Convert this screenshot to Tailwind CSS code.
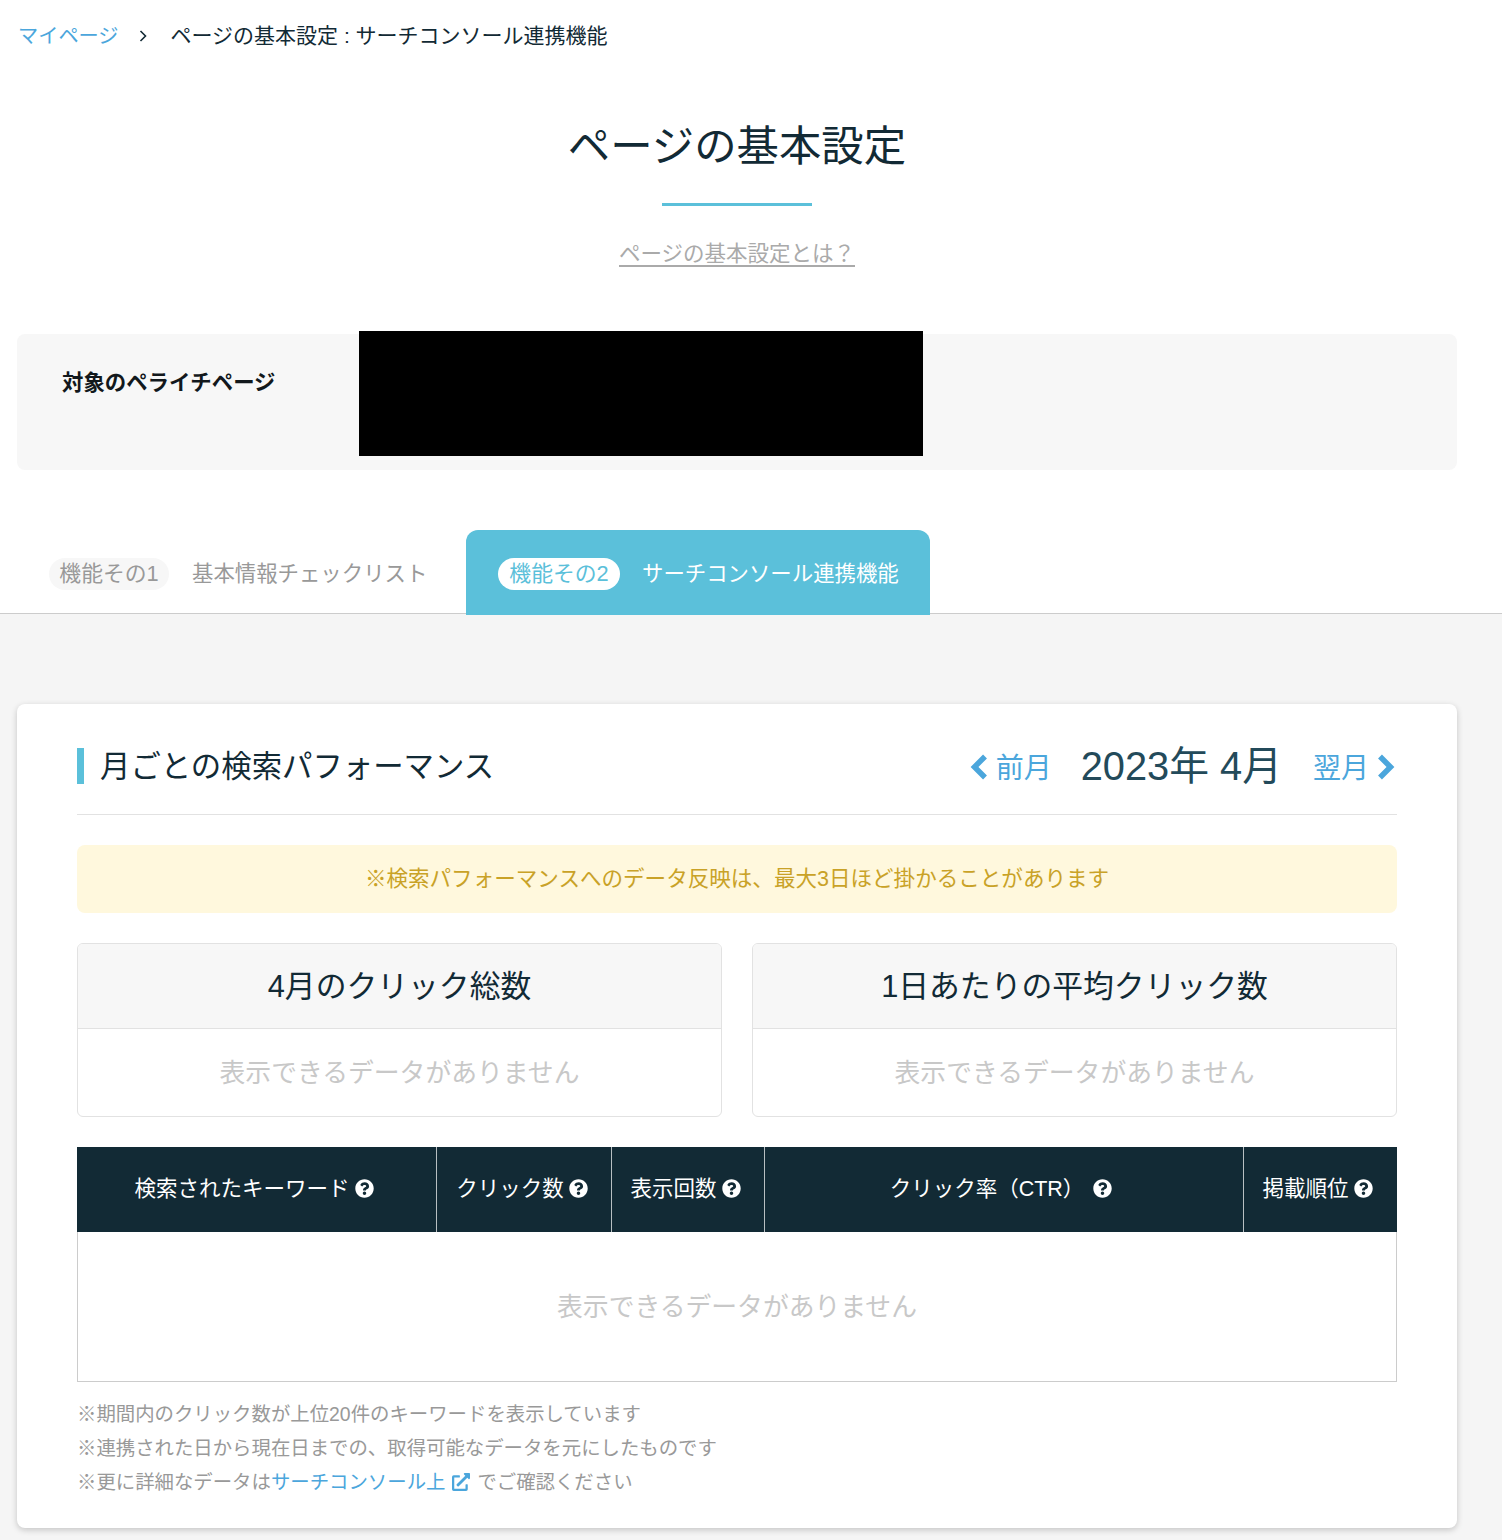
<!DOCTYPE html>
<html lang="ja">
<head>
    <meta charset="UTF-8">
    <title>ページの基本設定</title>
    <script src="https://cdn.jsdelivr.net/npm/@tailwindcss/browser@4"></script>
</head>
<body class="bg-white text-[#122a35] font-['Liberation_Sans','Noto_Sans_CJK_JP',sans-serif]">
    <!-- Breadcrumb -->
    <div class="flex items-center h-[36px] mt-[18px] pl-[18px] text-[21px] leading-[36px]">
        <a class="w-[102.5px] text-[#4ba6dc] text-[20.2px]">マイページ</a>
        <svg class="w-[8px] h-[12px] ml-[18px] mr-[24px]" viewBox="0 0 8 12" fill="none" stroke="#122a35" stroke-width="1.6"><path d="M1.5 1l5 5-5 5"/></svg>
        <span>ページの基本設定 : サーチコンソール連携機能</span>
    </div>

    <!-- Title -->
    <div class="flex flex-col items-center w-[1474px]">
        <h1 class="mt-[63px] text-[42.4px] leading-[60px]">ページの基本設定</h1>
        <div class="mt-[26px] w-[150px] h-[3px] bg-[#5bc0da]"></div>
        <a class="mt-[33px] text-[21.5px] leading-[30px] text-[#aaaaaa] border-b-2 border-[#aaaaaa] h-[28px]">ページの基本設定とは？</a>
    </div>

    <!-- Target page -->
    <div class="flex mt-[67px] mx-[17px] w-[1440px] h-[136px] bg-[#f7f7f7] rounded-lg">
        <div class="w-[342px] pl-[45px] pt-[34px] text-[21.4px] leading-[30px] font-bold text-[#12181c]">対象のペライチページ</div>
        <div class="w-[564px] h-[125px] -mt-[3px] bg-black"></div>
    </div>

    <!-- Tabs -->
    <div class="flex mt-[60px] h-[83px] pl-[49px] border-b border-[#cccccc] box-content">
        <div class="flex items-center w-[417px] h-[87px] pt-[1px]">
            <span class="w-[120px] h-[32px] rounded-full bg-[#f7f7f7] text-[#999999] text-[21.8px] leading-[32px] text-center">機能その1</span>
            <span class="ml-[23px] text-[#999999] text-[21.4px]">基本情報チェックリスト</span>
        </div>
        <div class="flex items-center w-[464px] h-[85px] pl-[32px] pt-[2px] bg-[#5bc0da] rounded-t-xl">
            <span class="w-[122px] h-[32px] rounded-full bg-white text-[#5bc0da] text-[21.8px] leading-[32px] text-center">機能その2</span>
            <span class="ml-[22px] pt-[2px] text-white text-[21.4px]">サーチコンソール連携機能</span>
        </div>
    </div>

    <!-- Search performance -->
    <div class="bg-[#f5f5f5] pt-[90px] pb-[12px] px-[17px]">
        <div class="w-[1440px] h-[824px] bg-white rounded-lg shadow-[0_2px_6px_rgba(0,0,0,0.2)] px-[60px] pt-[44px]">
            <div class="flex items-center justify-between h-[36px] border-b border-[#e2e2e2] pb-[30px] box-content">
                <h2 class="border-l-[7px] border-[#5bc0da] pl-[16px] h-[36px] text-[30.4px] leading-[36px]">月ごとの検索パフォーマンス</h2>
                <div class="flex items-center leading-none">
                    <svg class="w-[18px] h-[26px] mt-[2px]" viewBox="0 0 18 26" fill="none" stroke="#4ba6dc" stroke-width="5.5"><path d="M15 2.5L4.5 13 15 23.5"/></svg>
                    <span class="ml-[8px] pt-[6px] text-[28px] text-[#4ba6dc]">前月</span>
                    <span class="ml-[29px] pt-[2px] text-[39.8px] text-[#234a5a]">2023年 4月</span>
                    <span class="ml-[31px] pt-[6px] text-[28px] text-[#4ba6dc]">翌月</span>
                    <svg class="w-[18px] h-[26px] mt-[2px] ml-[8px] mr-[2px]" viewBox="0 0 18 26" fill="none" stroke="#4ba6dc" stroke-width="5.5"><path d="M3 2.5L13.5 13 3 23.5"/></svg>
                </div>
            </div>

            <div class="mt-[30px] h-[68px] bg-[#fff8dd] rounded-lg flex items-center justify-center text-[21.55px] text-[#c9a227]">※検索パフォーマンスへのデータ反映は、最大3日ほど掛かることがあります</div>

            <div class="grid grid-cols-2 gap-[30px] mt-[30px]">
                <div class="h-[174px] border border-[#e2e2e2] rounded-md overflow-hidden">
                    <div class="h-[85px] pt-[2px] bg-[#f7f7f7] border-b border-[#e2e2e2] flex items-center justify-center text-[30.8px]">4月のクリック総数</div>
                    <div class="h-[87px] pt-[2px] flex items-center justify-center text-[25.8px] text-[#c8c8c8]">表示できるデータがありません</div>
                </div>
                <div class="h-[174px] border border-[#e2e2e2] rounded-md overflow-hidden">
                    <div class="h-[85px] pt-[2px] bg-[#f7f7f7] border-b border-[#e2e2e2] flex items-center justify-center text-[30.8px]">1日あたりの平均クリック数</div>
                    <div class="h-[87px] pt-[2px] flex items-center justify-center text-[25.8px] text-[#c8c8c8]">表示できるデータがありません</div>
                </div>
            </div>

            <!-- Keyword table -->
            <div class="mt-[30px] flex h-[85px] bg-[#122a35] text-white text-[21.5px]">
                <div class="w-[359px] pr-[5px] flex items-center justify-center gap-[5px]">検索されたキーワード
                    <svg class="w-[19px] h-[19px] -mt-[2px]" viewBox="0 0 512 512" fill="#fff"><path d="M504 256c0 136.997-111.043 248-248 248S8 392.997 8 256C8 119.083 119.043 8 256 8s248 111.083 248 248zM262.655 90c-54.497 0-89.255 22.957-116.549 63.758-3.536 5.286-2.353 12.415 2.715 16.258l34.699 26.31c5.205 3.947 12.621 3.008 16.665-2.122 17.864-22.658 30.113-35.797 57.303-35.797 20.429 0 45.698 13.148 45.698 32.958 0 14.976-12.363 22.667-32.534 33.976C247.128 238.528 216 254.941 216 296v4c0 6.627 5.373 12 12 12h56c6.627 0 12-5.373 12-12v-1.333c0-28.462 83.186-29.647 83.186-106.667 0-58.002-60.165-102-116.531-102zM256 338c-25.365 0-46 20.635-46 46 0 25.364 20.635 46 46 46s46-20.636 46-46c0-25.365-20.635-46-46-46z"/></svg>
                </div>
                <div class="w-[175px] pr-[4px] border-l border-white/70 flex items-center justify-center gap-[5px]">クリック数
                    <svg class="w-[19px] h-[19px] -mt-[2px]" viewBox="0 0 512 512" fill="#fff"><path d="M504 256c0 136.997-111.043 248-248 248S8 392.997 8 256C8 119.083 119.043 8 256 8s248 111.083 248 248zM262.655 90c-54.497 0-89.255 22.957-116.549 63.758-3.536 5.286-2.353 12.415 2.715 16.258l34.699 26.31c5.205 3.947 12.621 3.008 16.665-2.122 17.864-22.658 30.113-35.797 57.303-35.797 20.429 0 45.698 13.148 45.698 32.958 0 14.976-12.363 22.667-32.534 33.976C247.128 238.528 216 254.941 216 296v4c0 6.627 5.373 12 12 12h56c6.627 0 12-5.373 12-12v-1.333c0-28.462 83.186-29.647 83.186-106.667 0-58.002-60.165-102-116.531-102zM256 338c-25.365 0-46 20.635-46 46 0 25.364 20.635 46 46 46s46-20.636 46-46c0-25.365-20.635-46-46-46z"/></svg>
                </div>
                <div class="w-[153px] pr-[5px] border-l border-white/70 flex items-center justify-center gap-[5px]">表示回数
                    <svg class="w-[19px] h-[19px] -mt-[2px]" viewBox="0 0 512 512" fill="#fff"><path d="M504 256c0 136.997-111.043 248-248 248S8 392.997 8 256C8 119.083 119.043 8 256 8s248 111.083 248 248zM262.655 90c-54.497 0-89.255 22.957-116.549 63.758-3.536 5.286-2.353 12.415 2.715 16.258l34.699 26.31c5.205 3.947 12.621 3.008 16.665-2.122 17.864-22.658 30.113-35.797 57.303-35.797 20.429 0 45.698 13.148 45.698 32.958 0 14.976-12.363 22.667-32.534 33.976C247.128 238.528 216 254.941 216 296v4c0 6.627 5.373 12 12 12h56c6.627 0 12-5.373 12-12v-1.333c0-28.462 83.186-29.647 83.186-106.667 0-58.002-60.165-102-116.531-102zM256 338c-25.365 0-46 20.635-46 46 0 25.364 20.635 46 46 46s46-20.636 46-46c0-25.365-20.635-46-46-46z"/></svg>
                </div>
                <div class="w-[479px] pr-[6px] border-l border-white/70 flex items-center justify-center gap-[9px]">クリック率（CTR）
                    <svg class="w-[19px] h-[19px] -mt-[2px]" viewBox="0 0 512 512" fill="#fff"><path d="M504 256c0 136.997-111.043 248-248 248S8 392.997 8 256C8 119.083 119.043 8 256 8s248 111.083 248 248zM262.655 90c-54.497 0-89.255 22.957-116.549 63.758-3.536 5.286-2.353 12.415 2.715 16.258l34.699 26.31c5.205 3.947 12.621 3.008 16.665-2.122 17.864-22.658 30.113-35.797 57.303-35.797 20.429 0 45.698 13.148 45.698 32.958 0 14.976-12.363 22.667-32.534 33.976C247.128 238.528 216 254.941 216 296v4c0 6.627 5.373 12 12 12h56c6.627 0 12-5.373 12-12v-1.333c0-28.462 83.186-29.647 83.186-106.667 0-58.002-60.165-102-116.531-102zM256 338c-25.365 0-46 20.635-46 46 0 25.364 20.635 46 46 46s46-20.636 46-46c0-25.365-20.635-46-46-46z"/></svg>
                </div>
                <div class="w-[154px] pr-[6px] border-l border-white/70 flex items-center justify-center gap-[5px]">掲載順位
                    <svg class="w-[19px] h-[19px] -mt-[2px]" viewBox="0 0 512 512" fill="#fff"><path d="M504 256c0 136.997-111.043 248-248 248S8 392.997 8 256C8 119.083 119.043 8 256 8s248 111.083 248 248zM262.655 90c-54.497 0-89.255 22.957-116.549 63.758-3.536 5.286-2.353 12.415 2.715 16.258l34.699 26.31c5.205 3.947 12.621 3.008 16.665-2.122 17.864-22.658 30.113-35.797 57.303-35.797 20.429 0 45.698 13.148 45.698 32.958 0 14.976-12.363 22.667-32.534 33.976C247.128 238.528 216 254.941 216 296v4c0 6.627 5.373 12 12 12h56c6.627 0 12-5.373 12-12v-1.333c0-28.462 83.186-29.647 83.186-106.667 0-58.002-60.165-102-116.531-102zM256 338c-25.365 0-46 20.635-46 46 0 25.364 20.635 46 46 46s46-20.636 46-46c0-25.365-20.635-46-46-46z"/></svg>
                </div>
            </div>
            <div class="h-[150px] pt-[2px] border border-t-0 border-[#cccccc] flex items-center justify-center text-[25.8px] text-[#c8c8c8]">表示できるデータがありません</div>

            <!-- Notes -->
            <div class="mt-[15px] text-[19.4px] leading-[34px] text-[#999999]">
                <p>※期間内のクリック数が上位20件のキーワードを表示しています</p>
                <p>※連携された日から現在日までの、取得可能なデータを元にしたものです</p>
                <p class="flex items-center">※更に詳細なデータは<a class="text-[#4ba6dc]">サーチコンソール上</a>
                    <svg class="w-[18px] h-[18px] ml-[7px] mr-[7px]" viewBox="0 0 512 512" fill="#4ba6dc"><path d="M432,320H400a16,16,0,0,0-16,16V448H64V128H208a16,16,0,0,0,16-16V80a16,16,0,0,0-16-16H48A48,48,0,0,0,0,112V464a48,48,0,0,0,48,48H400a48,48,0,0,0,48-48V336A16,16,0,0,0,432,320ZM488,0h-128c-21.37,0-32.05,25.91-17,41l35.73,35.73L135,320.37a24,24,0,0,0,0,34L157.67,377a24,24,0,0,0,34,0L435.28,133.32,471,169c15,15,41,4.5,41-17V24A24,24,0,0,0,488,0Z"/></svg>
                    でご確認ください</p>
            </div>
        </div>
    </div>
</body>
</html>
